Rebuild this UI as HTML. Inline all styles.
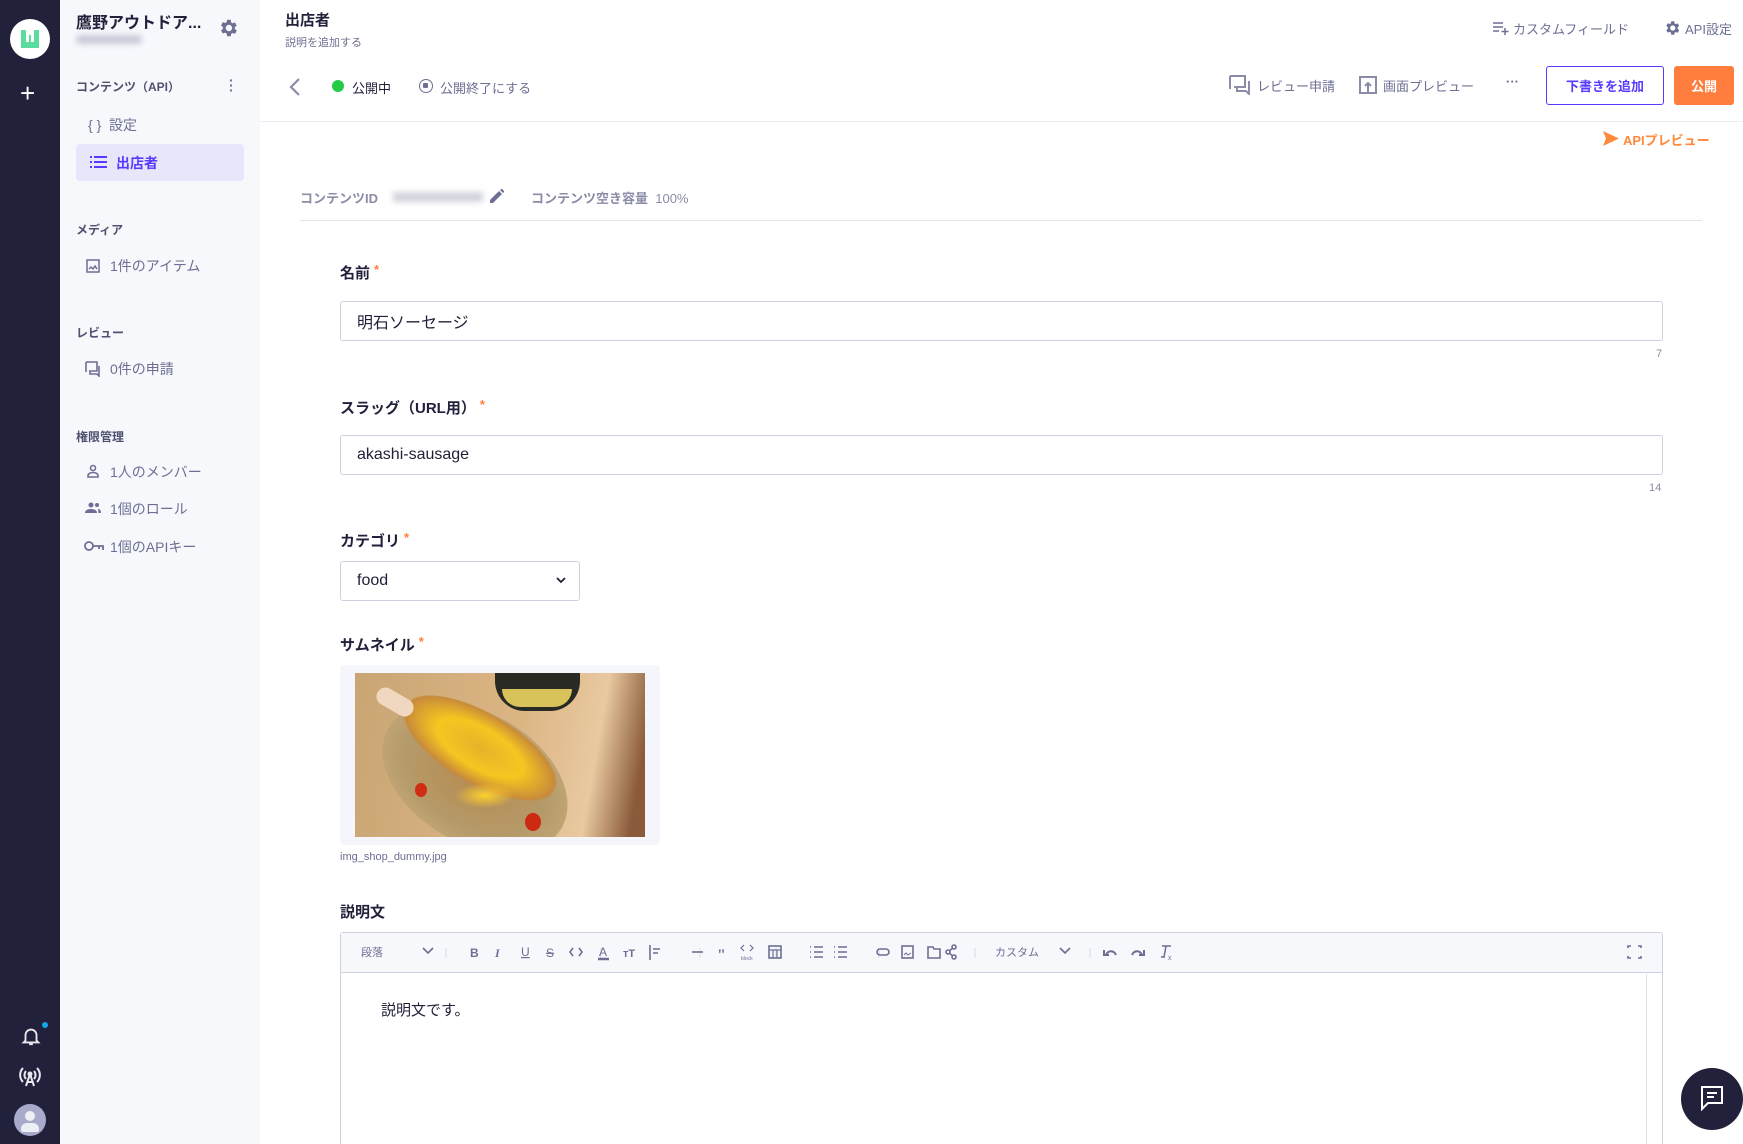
<!DOCTYPE html>
<html style="width:1743px;height:1144px;overflow:hidden"><head><meta charset="utf-8">
<style>
*{box-sizing:border-box;margin:0;padding:0}
body{width:1743px;height:1144px;overflow:hidden;background:#fff;font-family:"Liberation Sans","Noto Sans CJK JP",sans-serif;color:#21213b;position:relative}
#wrap{position:absolute;left:0;top:0;width:1743px;height:1144px;overflow:hidden}
.a{position:absolute;white-space:nowrap}
.dark{left:0;top:0;width:60px;height:1144px;background:#21213b}
.side{left:60px;top:0;width:200px;height:1144px;background:#f7f8fc}
.sh{font-size:12px;font-weight:bold;color:#4f5170}
.si{font-size:14px;color:#6c6f93}
.lab{font-size:15px;font-weight:bold;color:#21213b}
.lab b{color:#ff7e3e;font-size:13px;margin-left:4px;vertical-align:top}
.inp{border:1px solid #cfd0e0;border-radius:3px;background:#fff;font-size:16px;padding-left:16px;display:flex;align-items:center;color:#21213b}
.cnt{font-size:11px;color:#8a8ca8}
.tb{font-size:12px;color:#6c6f93;top:942px}
svg.i{position:absolute}
</style></head><body><div id="wrap">
<div class="a dark"></div>
<div class="a side"></div>
<div class="a" style="left:10px;top:19px;width:40px;height:40px;border-radius:50%;background:#fff"></div>
<svg class="i" style="left:18px;top:27px" width="24" height="24" viewBox="0 0 24 24"><path d="M3 3h5v12h3V8h2v7h3V3h5v18H3z" fill="#5bdc9f"/></svg>
<div class="a" style="left:20px;top:80px;color:#fff;font-size:26px;line-height:26px">+</div>
<svg class="i" style="left:20px;top:1025px" width="22" height="22" viewBox="0 0 24 24" fill="none" stroke="#e8e8f0" stroke-width="2"><path d="M6 17V11a6 6 0 0 1 12 0v6l2 2H4z M10 21h4"/></svg>
<div class="a" style="left:42px;top:1022px;width:6px;height:6px;border-radius:50%;background:#17a5e6"></div>
<svg class="i" style="left:18px;top:1065px" width="24" height="22" viewBox="0 0 24 22" fill="none" stroke="#e8e8f0" stroke-width="2"><path d="M5 3a10 10 0 0 0 0 14M19 3a10 10 0 0 1 0 14M8 6a6 6 0 0 0 0 8M16 6a6 6 0 0 1 0 8M12 9l-4 12M12 9l4 12M9 17h6"/><circle cx="12" cy="9" r="1.5" fill="#e8e8f0"/></svg>
<div class="a" style="left:14px;top:1104px;width:32px;height:32px;border-radius:50%;background:#a9aacb;overflow:hidden"><div class="a" style="left:11px;top:7px;width:10px;height:10px;border-radius:50%;background:#eeeef5"></div><div class="a" style="left:7px;top:19px;width:18px;height:9px;border-radius:6px 6px 2px 2px;background:#eeeef5"></div></div>
<div class="a" style="left:76px;top:9px;font-size:16px;font-weight:bold">鷹野アウトドア...</div>
<div class="a" style="left:76px;top:35px;width:66px;height:9px;background:#c9cad8;filter:blur(3px);border-radius:4px"></div>
<svg class="i" style="left:217px;top:17px" width="22" height="22" viewBox="0 0 24 24"><path fill="#6c6f93" d="M19.4 13a7.5 7.5 0 0 0 0-2l2.1-1.6-2-3.5-2.5 1a7 7 0 0 0-1.7-1L15 3h-4l-.4 2.6a7 7 0 0 0-1.7 1l-2.5-1-2 3.5L6.5 11a7.5 7.5 0 0 0 0 2l-2.1 1.6 2 3.5 2.5-1a7 7 0 0 0 1.7 1L11 21h4l.4-2.6a7 7 0 0 0 1.7-1l2.5 1 2-3.5zM13 15.5a3.5 3.5 0 1 1 0-7 3.5 3.5 0 0 1 0 7z"/></svg>
<div class="a sh" style="left:76px;top:78px">コンテンツ（API）</div>
<div class="a" style="left:229px;top:78px;font-size:14px;color:#6c6f93;font-weight:bold;line-height:5px">·<br>·<br>·</div>
<div class="a si" style="left:88px;top:115px">{ }&nbsp; 設定</div>
<div class="a" style="left:76px;top:144px;width:168px;height:37px;background:#e8e6fb;border-radius:4px"></div>
<svg class="i" style="left:90px;top:155px" width="17" height="14" viewBox="0 0 17 14" fill="#563bff"><rect x="0" y="1" width="2" height="2"/><rect x="0" y="6" width="2" height="2"/><rect x="0" y="11" width="2" height="2"/><rect x="4" y="1" width="13" height="2"/><rect x="4" y="6" width="13" height="2"/><rect x="4" y="11" width="13" height="2"/></svg>
<div class="a" style="left:116px;top:153px;font-size:14px;font-weight:bold;color:#563bff">出店者</div>
<div class="a sh" style="left:76px;top:221px">メディア</div>
<svg class="i" style="left:86px;top:259px" width="14" height="14" viewBox="0 0 14 14" fill="none" stroke="#6c6f93" stroke-width="1.5"><rect x="1" y="1" width="12" height="12"/><path d="M3 10l2-2 2 2 2-3 2 3"/></svg>
<div class="a si" style="left:110px;top:256px">1件のアイテム</div>
<div class="a sh" style="left:76px;top:324px">レビュー</div>
<svg class="i" style="left:85px;top:361px" width="16" height="16" viewBox="0 0 16 16" fill="none" stroke="#6c6f93" stroke-width="1.6"><path d="M1 1h11v9H4M1 1v10M14 5v10l-2-2H5v-3"/></svg>
<div class="a si" style="left:110px;top:359px">0件の申請</div>
<div class="a sh" style="left:76px;top:428px">権限管理</div>
<svg class="i" style="left:86px;top:464px" width="14" height="14" viewBox="0 0 14 14" fill="none" stroke="#6c6f93" stroke-width="1.6"><circle cx="7" cy="4" r="2.5"/><path d="M2 13v-1.5c0-2 3-3 5-3s5 1 5 3V13z"/></svg>
<div class="a si" style="left:110px;top:462px">1人のメンバー</div>
<svg class="i" style="left:85px;top:502px" width="16" height="12" viewBox="0 0 16 12" fill="#6c6f93"><circle cx="6" cy="3" r="2.5"/><path d="M0 11c0-3 3-4 6-4s6 1 6 4z"/><circle cx="12" cy="3" r="2"/><path d="M13 7c2 0 3 1.5 3 4h-2.5"/></svg>
<div class="a si" style="left:110px;top:499px">1個のロール</div>
<svg class="i" style="left:84px;top:540px" width="20" height="12" viewBox="0 0 20 12" fill="none" stroke="#6c6f93" stroke-width="1.8"><circle cx="5" cy="6" r="4"/><path d="M9 6h10v4M15 6v3"/></svg>
<div class="a si" style="left:110px;top:537px">1個のAPIキー</div>
<div class="a" style="left:285px;top:9px;font-size:15px;font-weight:bold">出店者</div>
<div class="a" style="left:285px;top:34px;font-size:11px;color:#6c6f93">説明を追加する</div>
<svg class="i" style="left:1493px;top:21px" width="16" height="14" viewBox="0 0 16 14" fill="none" stroke="#6c6f93" stroke-width="1.5"><path d="M0 2h10M0 6h10M0 10h6M12 7v7M8.5 10.5h7"/></svg>
<div class="a" style="left:1513px;top:19px;font-size:13px;color:#6c6f93">カスタムフィールド</div>
<svg class="i" style="left:1663px;top:19px" width="18" height="18" viewBox="0 0 24 24"><path fill="#6c6f93" d="M19.4 13a7.5 7.5 0 0 0 0-2l2.1-1.6-2-3.5-2.5 1a7 7 0 0 0-1.7-1L15 3h-4l-.4 2.6a7 7 0 0 0-1.7 1l-2.5-1-2 3.5L6.5 11a7.5 7.5 0 0 0 0 2l-2.1 1.6 2 3.5 2.5-1a7 7 0 0 0 1.7 1L11 21h4l.4-2.6a7 7 0 0 0 1.7-1l2.5 1 2-3.5zM13 15.5a3.5 3.5 0 1 1 0-7 3.5 3.5 0 0 1 0 7z"/></svg>
<div class="a" style="left:1685px;top:19px;font-size:13px;color:#6c6f93">API設定</div>
<svg class="i" style="left:289px;top:77px" width="12" height="20" viewBox="0 0 12 20" fill="none" stroke="#8a8ca8" stroke-width="2.2"><path d="M10 2L2 10l8 8"/></svg>
<div class="a" style="left:332px;top:80px;width:12px;height:12px;border-radius:50%;background:#22cc44"></div>
<div class="a" style="left:352px;top:78px;font-size:13px;color:#21213b">公開中</div>
<div class="a" style="left:419px;top:79px;width:14px;height:14px;border-radius:50%;border:1.6px solid #6c6f93"><div class="a" style="left:3px;top:3px;width:5px;height:5px;background:#6c6f93;border-radius:1px"></div></div>
<div class="a" style="left:440px;top:78px;font-size:13px;color:#6c6f93">公開終了にする</div>
<svg class="i" style="left:1229px;top:75px" width="22" height="20" viewBox="0 0 22 20" fill="none" stroke="#8a8ca8" stroke-width="2"><path d="M1 1h15v11H5M1 1v13M20 6v13l-3-3H8v-3"/></svg>
<div class="a" style="left:1257px;top:76px;font-size:13px;color:#6c6f93">レビュー申請</div>
<svg class="i" style="left:1359px;top:76px" width="18" height="18" viewBox="0 0 18 18" fill="none" stroke="#8a8ca8" stroke-width="2"><rect x="1" y="1" width="16" height="16"/><path d="M9 16V7M6 10l3-3 3 3"/></svg>
<div class="a" style="left:1383px;top:76px;font-size:13px;color:#6c6f93">画面プレビュー</div>
<div class="a" style="left:1506px;top:74px;font-size:13px;color:#6c6f93;font-weight:bold">···</div>
<div class="a" style="left:1546px;top:66px;width:118px;height:39px;border:1.5px solid #563bff;border-radius:3px;display:flex;align-items:center;justify-content:center;font-size:13px;font-weight:bold;color:#563bff">下書きを追加</div>
<div class="a" style="left:1674px;top:66px;width:60px;height:39px;background:#ff7e3e;border-radius:3px;display:flex;align-items:center;justify-content:center;font-size:13px;font-weight:bold;color:#fff">公開</div>
<div class="a" style="left:260px;top:121px;width:1483px;height:1px;background:#ececf2"></div>
<svg class="i" style="left:1603px;top:131px" width="16" height="15" viewBox="0 0 16 15"><path d="M0 0l16 7.5L0 15l3-7.5z" fill="#ff8a3c"/></svg>
<div class="a" style="left:1623px;top:130px;font-size:13px;font-weight:bold;color:#ff8a3c">APIプレビュー</div>
<div class="a" style="left:300px;top:188px;font-size:13px;font-weight:bold;color:#8a8ca8">コンテンツID</div>
<div class="a" style="left:393px;top:192px;width:90px;height:10px;background:#d2d3de;filter:blur(3px)"></div>
<svg class="i" style="left:490px;top:189px" width="14" height="14" viewBox="0 0 14 14"><path d="M0 14V11L9 2l3 3-9 9zM10 1l1.5-1.5 3 3L13 4z" fill="#6c6f93"/></svg>
<div class="a" style="left:531px;top:188px;font-size:13px;font-weight:bold;color:#8a8ca8">コンテンツ空き容量 <span style="font-weight:normal">&nbsp;100%</span></div>
<div class="a" style="left:300px;top:220px;width:1402px;height:1px;background:#e3e3ee"></div>
<div class="a lab" style="left:340px;top:262px">名前<b>*</b></div>
<div class="a inp" style="left:340px;top:301px;width:1323px;height:40px">明石ソーセージ</div>
<div class="a cnt" style="left:1656px;top:348px">7</div>
<div class="a lab" style="left:340px;top:397px">スラッグ（URL用）<b>*</b></div>
<div class="a inp" style="left:340px;top:435px;width:1323px;height:40px">akashi-sausage</div>
<div class="a cnt" style="left:1649px;top:482px">14</div>
<div class="a lab" style="left:340px;top:530px">カテゴリ<b>*</b></div>
<div class="a inp" style="left:340px;top:561px;width:240px;height:40px">food</div>
<svg class="i" style="left:556px;top:577px" width="10" height="7" viewBox="0 0 10 7" fill="none" stroke="#21213b" stroke-width="1.8"><path d="M1 1l4 4 4-4"/></svg>
<div class="a lab" style="left:340px;top:634px">サムネイル<b>*</b></div>
<div class="a" style="left:340px;top:665px;width:320px;height:180px;background:#f5f6fb;border-radius:4px"></div>
<div class="a" style="left:355px;top:673px;width:290px;height:164px;overflow:hidden;background:linear-gradient(100deg,#c9a574 0%,#dcb584 55%,#e8c9a0 80%,#8a5a3a 95%)">
 <div class="a" style="left:140px;top:0;width:85px;height:38px;background:#2a2a24;border-radius:0 0 30px 30px"></div>
 <div class="a" style="left:147px;top:16px;width:70px;height:18px;background:#d8c35a;border-radius:0 0 20px 20px"></div>
 <div class="a" style="left:20px;top:40px;width:200px;height:130px;background:radial-gradient(ellipse at 50% 50%,#b88b4f 0%,#b59a6a 55%,#c2a676 75%,#9b6a3c 100%);border-radius:50%;transform:rotate(30deg)"></div>
 <div class="a" style="left:40px;top:40px;width:170px;height:70px;background:radial-gradient(ellipse,#e7b22a 0%,#f5c620 40%,#c88a3a 70%,transparent 72%);transform:rotate(30deg)"></div>
 <div class="a" style="left:100px;top:110px;width:60px;height:25px;background:radial-gradient(ellipse,#ffd12a,transparent 70%)"></div>
 <div class="a" style="left:60px;top:110px;width:12px;height:14px;background:#d12d14;border-radius:50%"></div>
 <div class="a" style="left:170px;top:140px;width:16px;height:18px;background:#cc2a12;border-radius:50%"></div>
 <div class="a" style="left:20px;top:20px;width:40px;height:18px;background:#f0d8c0;border-radius:10px;transform:rotate(30deg)"></div>
</div>
<div class="a" style="left:340px;top:851px;font-size:11px;color:#6c6f93">img_shop_dummy.jpg</div>
<div class="a lab" style="left:340px;top:901px">説明文</div>
<div class="a" style="left:340px;top:932px;width:1323px;height:212px;border:1px solid #cfd0e0;border-bottom:none;border-radius:3px 3px 0 0;background:#fff"></div>
<div class="a" style="left:341px;top:933px;width:1321px;height:40px;background:#f7f8fc;border-bottom:1px solid #cfd0e0"></div>
<div class="a" style="left:1646px;top:974px;width:1px;height:170px;background:#e0e0ea"></div>
<div class="a tb" style="left:361px;top:944px;font-size:11px">段落</div>
<div class="a tb" style="left:995px;top:944px;font-size:11px">カスタム</div>
<svg class="i" style="left:340px;top:940px" width="1320" height="24" viewBox="0 0 1320 24" fill="none" stroke="#6c6f93" stroke-width="1.6">
<path d="M83 8l5 5 5-5M720 8l5 5 5-5"/>
<g stroke="#d8d8e4" stroke-width="1"><path d="M106 8v10M261 8v10M360 8v10M436 8v10M539 8v10M635 8v10M750 8v10"/></g>
<text x="130" y="17" font-size="12" font-weight="bold" fill="#6c6f93" stroke="none" font-family="Liberation Sans">B</text>
<text x="155" y="17" font-size="12" font-style="italic" font-weight="bold" fill="#6c6f93" stroke="none" font-family="Liberation Serif">I</text>
<text x="181" y="16" font-size="12" fill="#6c6f93" stroke="none" font-family="Liberation Sans" text-decoration="underline">U</text>
<text x="206" y="17" font-size="12" fill="#6c6f93" stroke="none" font-family="Liberation Sans" text-decoration="line-through">S</text>
<path d="M233 8l-3 4 3 4M239 8l3 4-3 4"/>
<text x="259" y="16" font-size="12" fill="#6c6f93" stroke="none" font-family="Liberation Sans">A</text><path d="M258 19h11" stroke-width="2.5"/>
<text x="283" y="17" font-size="11" font-weight="bold" fill="#6c6f93" stroke="none" font-family="Liberation Sans">тT</text>
<path d="M310 5v15M313 9h7M313 13h5"/>
<path d="M352 12h11"/>
<text x="377" y="20" font-size="16" font-weight="bold" fill="#6c6f93" stroke="none" font-family="Liberation Serif">"</text>
<path d="M404 5l-3 3 3 3M410 5l3 3-3 3" stroke-width="1.2"/><text x="401" y="20" font-size="5" fill="#6c6f93" stroke="none">block</text>
<rect x="429" y="6" width="12" height="12"/><path d="M429 10h12M433 10v8M437 10v8" stroke-width="1.2"/>
<path d="M470 7h1M470 12h1M470 17h1M474 7h9M474 12h9M474 17h9M494 7h1M494 12h1M494 17h1M498 7h9M498 12h9M498 17h9"/>
<rect x="537" y="9" width="12" height="6" rx="3"/>
<rect x="562" y="6" width="11" height="12"/><path d="M564 15l2-2 2 2 3-2" stroke-width="1"/>
<path d="M588 7h5l1 2h6v9h-12z"/>
<circle cx="614" cy="7" r="2"/><circle cx="614" cy="17" r="2"/><circle cx="608" cy="12" r="2"/><path d="M609 11l4-3M609 13l4 3"/>
<path d="M766 15c2-5 8-5 10 0M764 10v5h5" stroke-width="2"/>
<path d="M802 15c-2-5-8-5-10 0M804 10v5h-5" stroke-width="2"/>
<path d="M822 6h9M826 6l-2 11M821 17h4" stroke-width="1.5"/><text x="828" y="20" font-size="7" fill="#6c6f93" stroke="none">x</text>
<path d="M1288 8V6h3M1298 6h3v2M1301 16v2h-3M1291 18h-3v-2"/>
</svg>
<div class="a" style="left:381px;top:999px;font-size:15px;color:#21213b">説明文です。</div>
<div class="a" style="left:1681px;top:1068px;width:62px;height:62px;border-radius:50%;background:#21213b"></div>
<svg class="i" style="left:1698px;top:1085px" width="28" height="26" viewBox="0 0 28 26" fill="none" stroke="#fff" stroke-width="2"><path d="M4 2h20v16H10l-6 6z"/><path d="M9 8h10M9 12h7"/></svg>
</div></body></html>
